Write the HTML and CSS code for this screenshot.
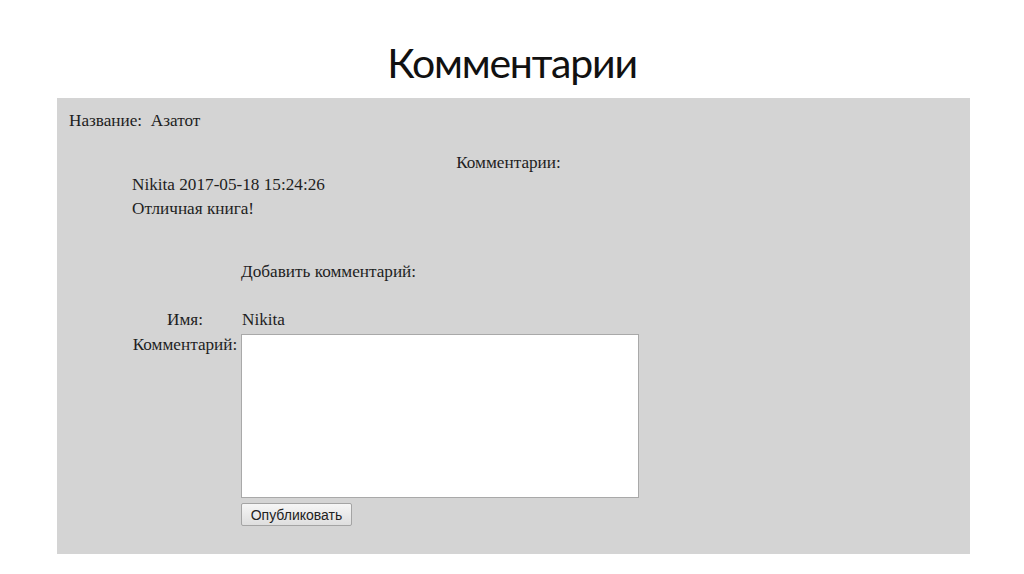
FILE: index.html
```html
<!DOCTYPE html>
<html lang="ru">
<head>
<meta charset="utf-8">
<title>Комментарии</title>
<link rel="stylesheet" href="styles.css">
</head>
<body>
<header class="slide-title">Комментарии</header>
<main class="panel">
  <div class="book">Название:&nbsp; Азатот</div>
  <div class="comments-title">Комментарии:</div>
  <div class="comment">
    <div class="comment-meta">Nikita 2017-05-18 15:24:26</div>
    <div class="comment-text">Отличная книга!</div>
  </div>
  <form class="form">
    <div class="form-head"></div>
    <div class="form-title">Добавить комментарий:</div>
    <div class="label label-name">Имя:</div>
    <div class="value value-name">Nikita</div>
    <div class="label label-comment">Комментарий:</div>
    <div class="field">
      <textarea class="textarea"></textarea>
      <button type="button" class="btn">Опубликовать</button>
    </div>
  </form>
</main>
</body>
</html>
```
FILE: styles.css
```css
html, body {
  margin: 0;
  padding: 0;
  background: #ffffff;
}
body {
  width: 1024px;
  height: 574px;
  overflow: hidden;
}
.slide-title {
  height: 98px;
  box-sizing: border-box;
  padding-top: 36px;
  text-align: center;
  font-family: Lato, "Open Sans", sans-serif;
  font-size: 41px;
  letter-spacing: -1.2px;
  line-height: 54px;
  color: #111;
}
.panel {
  margin-left: 57px;
  width: 913px;
  height: 456px;
  background: #d4d4d4;
  font-family: "Liberation Serif", "Times New Roman", serif;
  font-size: 17.2px;
  line-height: 20px;
  color: #1e1e1e;
  box-sizing: border-box;
  padding-top: 13px;
}
.book {
  padding-left: 12px;
}
.comments-title {
  margin-top: 22px;
  text-align: center;
  padding-right: 10px;
}
.comment {
  margin-top: 2px;
  padding-left: 75px;
}
.comment-text {
  margin-top: 4px;
}
.form {
  margin: 0;
  margin-top: 43px;
  margin-left: 75px;
  display: grid;
  grid-template-columns: 106px auto;
  column-gap: 3px;
  align-items: start;
}
.form-title {
  grid-column: 2;
}
.form-head {
  grid-column: 1;
}
.label {
  text-align: center;
}
.label-name, .value-name {
  margin-top: 28px;
}
.value-name {
  padding-left: 1px;
}
.label-comment {
  margin-top: 5px;
  white-space: nowrap;
}
.field {
  margin-top: 4px;
  display: flex;
  flex-direction: column;
  align-items: flex-start;
}
.textarea {
  display: block;
  width: 398px;
  height: 164px;
  box-sizing: border-box;
  margin: 0;
  border: 1px solid #a9a9a9;
  background: #ffffff;
  resize: none;
}
.btn {
  margin-top: 5px;
  width: 111px;
  height: 23px;
  padding: 0;
  font-family: "Liberation Sans", Arial, sans-serif;
  font-size: 14px;
  color: #222;
  background: linear-gradient(#f6f6f6, #dedede);
  border: 1px solid #a4a4a4;
  border-radius: 2px;
}
```
